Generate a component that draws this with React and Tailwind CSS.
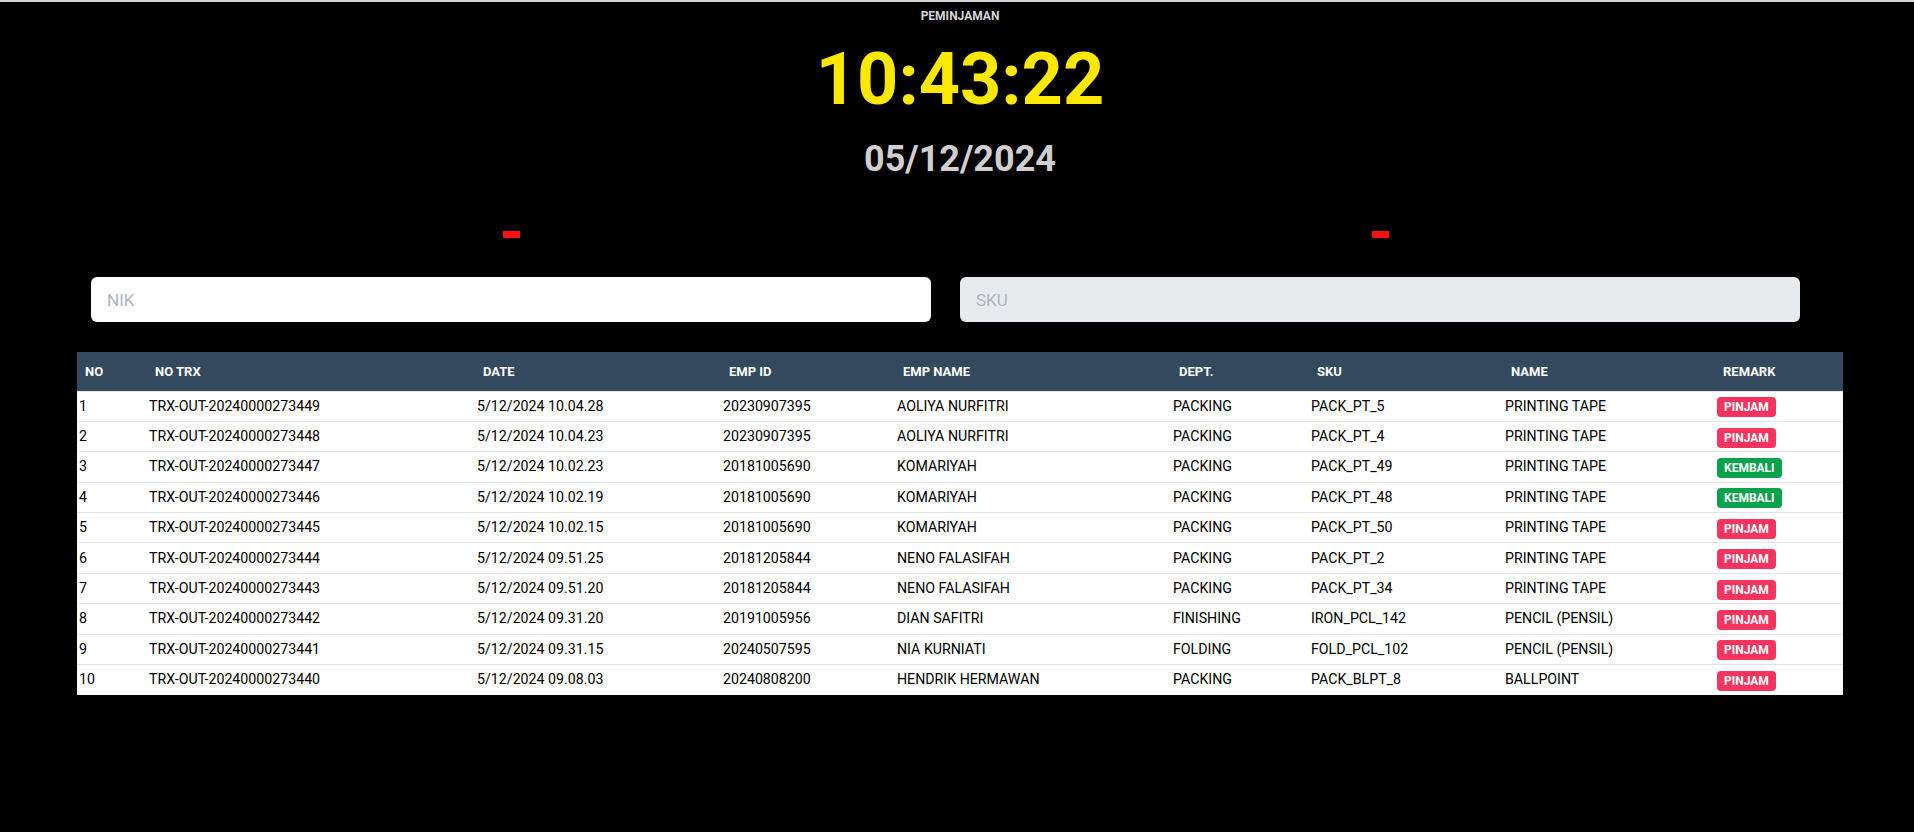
import { useState } from 'react'

const rows = [
  ['1', 'TRX-OUT-20240000273449', '5/12/2024 10.04.28', '20230907395', 'AOLIYA NURFITRI', 'PACKING', 'PACK_PT_5', 'PRINTING TAPE', 'PINJAM'],
  ['2', 'TRX-OUT-20240000273448', '5/12/2024 10.04.23', '20230907395', 'AOLIYA NURFITRI', 'PACKING', 'PACK_PT_4', 'PRINTING TAPE', 'PINJAM'],
  ['3', 'TRX-OUT-20240000273447', '5/12/2024 10.02.23', '20181005690', 'KOMARIYAH', 'PACKING', 'PACK_PT_49', 'PRINTING TAPE', 'KEMBALI'],
  ['4', 'TRX-OUT-20240000273446', '5/12/2024 10.02.19', '20181005690', 'KOMARIYAH', 'PACKING', 'PACK_PT_48', 'PRINTING TAPE', 'KEMBALI'],
  ['5', 'TRX-OUT-20240000273445', '5/12/2024 10.02.15', '20181005690', 'KOMARIYAH', 'PACKING', 'PACK_PT_50', 'PRINTING TAPE', 'PINJAM'],
  ['6', 'TRX-OUT-20240000273444', '5/12/2024 09.51.25', '20181205844', 'NENO FALASIFAH', 'PACKING', 'PACK_PT_2', 'PRINTING TAPE', 'PINJAM'],
  ['7', 'TRX-OUT-20240000273443', '5/12/2024 09.51.20', '20181205844', 'NENO FALASIFAH', 'PACKING', 'PACK_PT_34', 'PRINTING TAPE', 'PINJAM'],
  ['8', 'TRX-OUT-20240000273442', '5/12/2024 09.31.20', '20191005956', 'DIAN SAFITRI', 'FINISHING', 'IRON_PCL_142', 'PENCIL (PENSIL)', 'PINJAM'],
  ['9', 'TRX-OUT-20240000273441', '5/12/2024 09.31.15', '20240507595', 'NIA KURNIATI', 'FOLDING', 'FOLD_PCL_102', 'PENCIL (PENSIL)', 'PINJAM'],
  ['10', 'TRX-OUT-20240000273440', '5/12/2024 09.08.03', '20240808200', 'HENDRIK HERMAWAN', 'PACKING', 'PACK_BLPT_8', 'BALLPOINT', 'PINJAM'],
]

const headers = ['NO', 'NO TRX', 'DATE', 'EMP ID', 'EMP NAME', 'DEPT.', 'SKU', 'NAME', 'REMARK']
const widths = ['w-[70px]', 'w-[328px]', 'w-[246px]', 'w-[174px]', 'w-[276px]', 'w-[138px]', 'w-[194px]', 'w-[212px]', 'w-[128px]']

function Badge({ type }) {
  return (
    <span
      className={`inline-flex items-center h-[20px] px-[7px] rounded-[4px] text-[12px] font-bold text-white ${
        type === 'KEMBALI' ? 'bg-[#0aa14c]' : 'bg-[#f5345f]'
      }`}
    >
      {type}
    </span>
  )
}

export default function App() {
  const [nik, setNik] = useState('')

  return (
    <div className="min-h-[832px] bg-black border-t-2 border-[#d4d4d4] font-['Roboto',sans-serif]">
      {/* Header / clock */}
      <div className="flex flex-col items-center pl-[6px]">
        <div className="mt-[6px] text-[12px] leading-[16px] font-bold text-[#d6d6d6]">PEMINJAMAN</div>
        <div className="mt-[14px] text-[72px] leading-[84px] font-bold text-[#ffe800]">10:43:22</div>
        <div className="mt-[15px] text-[36px] leading-[44px] font-bold text-[#cfcfcf]">05/12/2024</div>
      </div>

      {/* Scan inputs */}
      <div className="pl-[91px] mt-[50px] flex gap-[29px]">
        <div className="w-[840px] flex flex-col items-center">
          <div className="w-[17px] h-[7px] bg-[#ff1010]" />
          <input
            value={nik}
            onChange={e => setNik(e.target.value)}
            placeholder="NIK"
            className="mt-[39px] w-full h-[45px] rounded-[6px] bg-white px-[16px] text-[17px] text-black placeholder:text-[#b0b6bd] outline-none"
          />
        </div>
        <div className="w-[840px] flex flex-col items-center">
          <div className="w-[17px] h-[7px] bg-[#ff1010]" />
          <input
            disabled
            placeholder="SKU"
            className="mt-[39px] w-full h-[45px] rounded-[6px] bg-[#e8ebee] px-[16px] text-[17px] placeholder:text-[#b0b6bd] outline-none"
          />
        </div>
      </div>

      {/* Transactions table */}
      <div className="ml-[77px] mt-[30px] w-[1766px]">
        <table className="w-full table-fixed border-collapse text-left">
          <colgroup>
            {widths.map((w, i) => (
              <col key={i} className={w} />
            ))}
          </colgroup>
          <thead>
            <tr className="bg-[#35495e] h-[39px]">
              {headers.map(h => (
                <th key={h} className="pl-[8px] text-[13px] font-bold text-white">
                  {h}
                </th>
              ))}
            </tr>
          </thead>
          <tbody className="bg-white">
            {rows.map(r => (
              <tr key={r[0]} className="h-[30.4px] border-t border-[#e2e5e8]">
                {r.slice(0, 8).map((c, i) => (
                  <td key={i} className="pl-[2px] text-[14.2px] text-black whitespace-nowrap">
                    {c}
                  </td>
                ))}
                <td className="pl-[2px]">
                  <Badge type={r[8]} />
                </td>
              </tr>
            ))}
          </tbody>
        </table>
      </div>
    </div>
  )
}
